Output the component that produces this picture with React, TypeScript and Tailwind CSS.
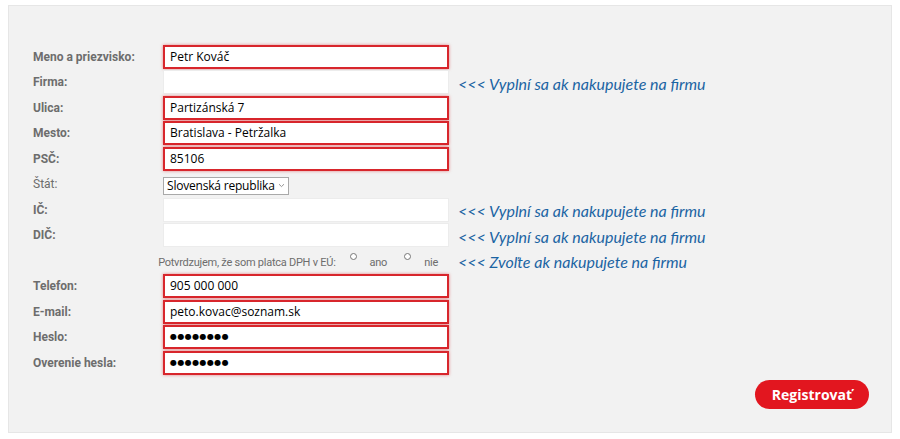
import React from "react";

const labelCls =
  "w-[130px] shrink-0 text-[12px] font-bold text-[#6d6d6d] [font-family:Roboto,'Liberation_Sans',sans-serif]";
const hintCls =
  "text-[16px] italic text-[#1b64a3] [font-family:Lato,'Open_Sans',sans-serif]";

function Field({
  value,
  required,
  dots,
}: {
  value?: string;
  required?: boolean;
  dots?: boolean;
}) {
  return (
    <div
      className={
        "flex h-[24px] w-[286px] shrink-0 items-center bg-white px-[5px] text-[12px] text-black [font-family:'Open_Sans','Noto_Sans',sans-serif] " +
        (required
          ? "border-2 border-[#d8262c] shadow-[0_0_3px_rgba(216,38,44,0.55)]"
          : "border border-[#ececec]")
      }
    >
      {dots ? (
        <span className="text-[8px] tracking-[0.4px] [font-family:'DejaVu_Sans',sans-serif]">
          ●●●●●●●●
        </span>
      ) : (
        value
      )}
    </div>
  );
}

function Row({
  label,
  value,
  required,
  hint,
  dots,
}: {
  label: string;
  value?: string;
  required?: boolean;
  hint?: string;
  dots?: boolean;
}) {
  return (
    <div className="flex h-[25.5px] items-center">
      <div className={labelCls}>{label}</div>
      <Field value={value} required={required} dots={dots} />
      {hint && <div className={"ml-[9px] mt-[3px] " + hintCls}>{hint}</div>}
    </div>
  );
}

const HINT = "<<< Vyplní sa ak nakupujete na firmu";

export default function App() {
  return (
    <div className="min-h-[439px] bg-white pt-[5px] pl-[8px] pr-[8px]">
      <div className="h-[428px] border border-[#e6e6e6] bg-[#f2f2f2] pl-[24px] pr-[22px] pt-[38px]">
        <Row label="Meno a priezvisko:" value="Petr Kováč" required />
        <Row label="Firma:" hint={HINT} />
        <Row label="Ulica:" value="Partizánská 7" required />
        <Row label="Mesto:" value="Bratislava - Petržalka" required />
        <Row label="PSČ:" value="85106" required />
        <div className="flex h-[25.5px] items-center">
          <div className="w-[130px] shrink-0 text-[12px] text-[#6d6d6d] [font-family:Roboto,'Liberation_Sans',sans-serif]">
            Štát:
          </div>
          <div className="mt-[3px] flex h-[18px] w-[126px] items-center justify-between overflow-hidden whitespace-nowrap border border-[#a9a9a9] bg-white pl-[3px] pr-[3px] text-[12px] tracking-[-0.2px] text-black [font-family:'Open_Sans','Noto_Sans',sans-serif]">
            <span>Slovenská republika</span>
            <svg width="7" height="5" viewBox="0 0 7 5" className="shrink-0">
              <path d="M1 1.2 L3.5 3.6 L6 1.2" fill="none" stroke="#888" strokeWidth="0.9" />
            </svg>
          </div>
        </div>
        <Row label="IČ:" hint={HINT} />
        <Row label="DIČ:" hint={HINT} />
        <div className="flex h-[25.5px] items-center">
          <div className="flex w-[405px] shrink-0 items-center justify-end whitespace-nowrap text-[11px] tracking-[-0.25px] text-[#6d6d6d] [font-family:Roboto,'Liberation_Sans',sans-serif]">
            <span className="mt-[4px]">Potvrdzujem, že som platca DPH v EÚ:</span>
            <span className="ml-[14px] mb-[8px] h-[7px] w-[7px] rounded-full border border-[#777] bg-white" />
            <span className="ml-[13px] mt-[4px]">ano</span>
            <span className="ml-[17px] mb-[8px] h-[7px] w-[7px] rounded-full border border-[#777] bg-white" />
            <span className="ml-[13px] mt-[4px]">nie</span>
          </div>
          <div className={"ml-[20px] mt-[2px] " + hintCls}>{"<<< Zvoľte ak nakupujete na firmu"}</div>
        </div>
        <Row label="Telefon:" value="905 000 000" required />
        <Row label="E-mail:" value="peto.kovac@soznam.sk" required />
        <Row label="Heslo:" required dots />
        <Row label="Overenie hesla:" required dots />
        <div className="mt-[4px] flex justify-end">
          <button className="h-[29px] w-[114px] rounded-full bg-[#e2161f] text-[14px] font-bold text-white [font-family:'Open_Sans','Noto_Sans',sans-serif]">
            Registrovať
          </button>
        </div>
      </div>
    </div>
  );
}
